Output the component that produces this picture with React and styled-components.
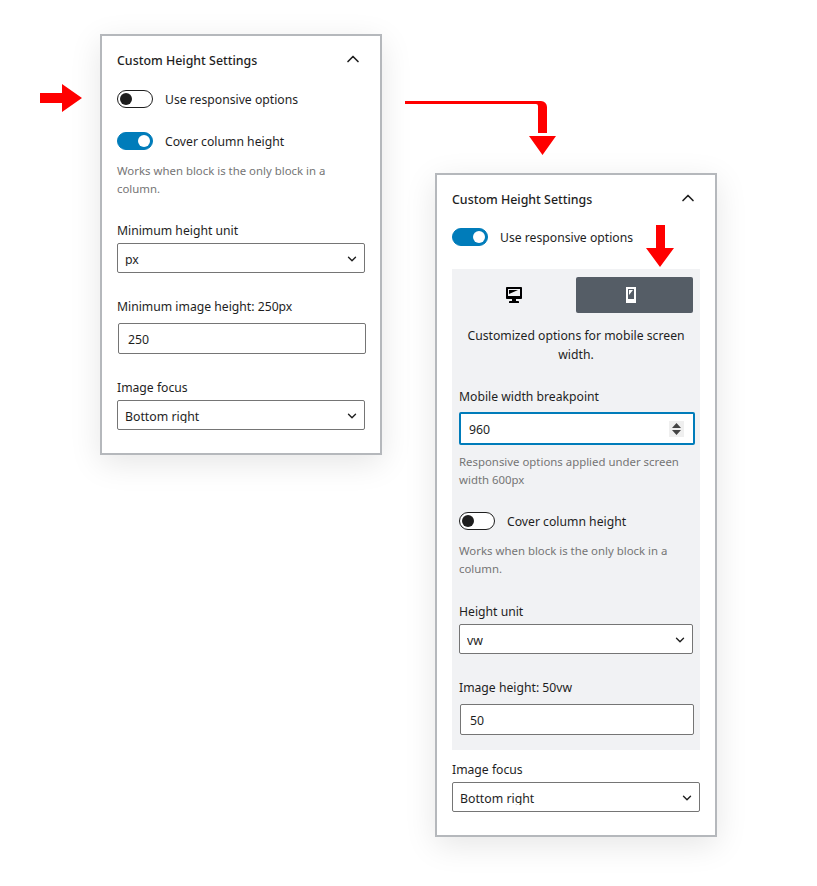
import styled, { createGlobalStyle } from "styled-components";
import { ChevronDown, ChevronUp } from "lucide-react";

const GlobalStyle = createGlobalStyle`
  html, body {
    margin: 0;
    padding: 0;
    background: #fff;
  }
  body {
    font-family: "Noto Sans", "Open Sans", sans-serif;
    font-size: 12.2px;
    color: #1e1e1e;
  }
`;

const Page = styled.div`
  position: relative;
  width: 817px;
  height: 886px;
  overflow: hidden;
  padding: 34px 0 0 100px;
  box-sizing: border-box;
  display: flex;
  align-items: flex-start;
  gap: 53px;
`;

const Panel = styled.section`
  width: 282px;
  box-sizing: border-box;
  flex: none;
  margin-top: ${(p) => p.$offset || 0}px;
  padding: 14px 15px 23px;
  background: #fff;
  border: 2px solid #b5b8bc;
  box-shadow: 0 8px 30px rgba(0, 0, 0, 0.1);
`;

const PanelHeader = styled.header`
  display: flex;
  justify-content: space-between;
  align-items: center;
  height: 20px;
  margin-bottom: ${(p) => p.$gap}px;
  font-size: 12.4px;
  font-weight: 500;
  svg {
    margin-right: 2px;
    margin-top: -3px;
  }
`;

const ToggleRow = styled.div`
  display: flex;
  align-items: center;
  gap: 12px;
  height: 18px;
  margin-bottom: ${(p) => p.$gap || 0}px;
`;

const Track = styled.span`
  position: relative;
  flex: none;
  width: 36px;
  height: 18px;
  box-sizing: border-box;
  border-radius: 9px;
  background: ${(p) => (p.$on ? "#007cba" : "#fff")};
  border: 1px solid ${(p) => (p.$on ? "#007cba" : "#1e1e1e")};
  &::after {
    content: "";
    position: absolute;
    top: 2px;
    left: ${(p) => (p.$on ? "20px" : "2px")};
    width: 12px;
    height: 12px;
    border-radius: 50%;
    background: ${(p) => (p.$on ? "#fff" : "#1e1e1e")};
  }
`;

const Help = styled.p`
  margin: 0 0 ${(p) => p.$gap || 0}px;
  font-size: 11.4px;
  line-height: 18px;
  color: #757575;
`;

const Label = styled.label`
  display: block;
  height: 18px;
  line-height: 18px;
  margin-top: ${(p) => p.$top || 0}px;
  margin-bottom: ${(p) => p.$gap ?? 3}px;
`;

const SelectBox = styled.div`
  position: relative;
  box-sizing: border-box;
  height: 30px;
  padding: 7px 7px 0;
  margin-bottom: ${(p) => p.$gap || 0}px;
  border: 1px solid #757575;
  border-radius: 2px;
  background: #fff;
  svg {
    position: absolute;
    right: 5px;
    top: 8px;
  }
`;

// the native select cuts the descenders off in the reference
const SelectValue = styled.span`
  display: block;
  height: 15px;
  line-height: 18px;
  overflow: hidden;
  font-size: 12.3px;
`;

const NumberInput = styled.div`
  display: flex;
  align-items: center;
  justify-content: space-between;
  box-sizing: border-box;
  width: ${(p) => p.$width || 248}px;
  height: ${(p) => (p.$focus ? 33 : 31)}px;
  margin: 0 0 ${(p) => p.$gap || 0}px ${(p) => (p.$focus ? 0 : 1)}px;
  padding: ${(p) => (p.$focus ? "1px 9px 0 8px" : "1px 8px 0 9px")};
  border: ${(p) => (p.$focus ? "2px solid #007cba" : "1px solid #757575")};
  border-radius: 2px;
  background: #fff;
  font-size: 12.3px;
`;

const Spinner = styled.span`
  display: flex;
  align-items: center;
  justify-content: center;
  width: 15px;
  height: 16px;
  margin-top: -1px;
  background: #efefef;
`;

const Responsive = styled.div`
  margin-bottom: 11px;
  padding: 8px 7px 15px;
  background: #f1f2f4;
`;

const Tabs = styled.div`
  display: grid;
  grid-template-columns: 1fr 1fr;
  margin-bottom: 13px;
`;

const Tab = styled.div`
  display: flex;
  align-items: center;
  justify-content: center;
  height: 36px;
  padding-right: 7px;
  box-sizing: border-box;
  border-radius: 2px;
  background: ${(p) => (p.$active ? "#555d66" : "transparent")};
`;

const TabNote = styled.p`
  margin: 0 0 24px;
  line-height: 19px;
  text-align: center;
`;

const Arrow = styled.svg`
  position: absolute;
  left: ${(p) => p.$x}px;
  top: ${(p) => p.$y}px;
`;

const DesktopIcon = () => (
  <svg width="20" height="20" viewBox="0 0 20 20">
    <path
      fill="#000"
      fillRule="evenodd"
      d="M3 2h14c.55 0 1 .45 1 1v10c0 .55-.45 1-1 1h-5v2h2c.55 0 1 .45 1 1v1H5v-1c0-.55.45-1 1-1h2v-2H3c-.55 0-1-.45-1-1V3c0-.55.45-1 1-1zm13 9V4H4v7h12zM5 5h9L5 9V5z"
    />
  </svg>
);

const MobileIcon = () => (
  <svg width="20" height="20" viewBox="0 0 20 20">
    <path
      fill="#fff"
      fillRule="evenodd"
      d="M5 2h10v16H5V2zm8 12V4H7v10h6zM8 5h4l-4 5V5z"
    />
  </svg>
);

const SpinnerIcon = () => (
  <svg width="9" height="12" viewBox="0 0 9 12">
    <path fill="#444" d="M4.500 0 9 5H0zM0 7h9l-4.500 5z" />
  </svg>
);

const Select = ({ value, gap }) => (
  <SelectBox $gap={gap}>
    <SelectValue>{value}</SelectValue>
    <ChevronDown size={14} strokeWidth={2.4} color="#1e1e1e" />
  </SelectBox>
);

const App = () => (
  <Page>
    <GlobalStyle />

    <Panel>
      <PanelHeader $gap={20}>
        Custom Height Settings
        <ChevronUp size={20} strokeWidth={2} color="#1e1e1e" />
      </PanelHeader>
      <ToggleRow $gap={24}>
        <Track />
        Use responsive options
      </ToggleRow>
      <ToggleRow $gap={12}>
        <Track $on />
        Cover column height
      </ToggleRow>
      <Help $gap={24}>Works when block is the only block in a column.</Help>
      <Label>Minimum height unit</Label>
      <Select value="px" gap={25} />
      <Label $gap={7}>Minimum image height: 250px</Label>
      <NumberInput>250</NumberInput>
      <Label $top={25}>Image focus</Label>
      <Select value="Bottom right" />
    </Panel>

    <Panel $offset={139}>
      <PanelHeader $gap={19}>
        Custom Height Settings
        <ChevronUp size={20} strokeWidth={2} color="#1e1e1e" />
      </PanelHeader>
      <ToggleRow $gap={23}>
        <Track $on />
        Use responsive options
      </ToggleRow>
      <Responsive>
        <Tabs>
          <Tab>
            <DesktopIcon />
          </Tab>
          <Tab $active>
            <MobileIcon />
          </Tab>
        </Tabs>
        <TabNote>Customized options for mobile screen width.</TabNote>
        <Label $gap={6}>Mobile width breakpoint</Label>
        <NumberInput $focus $width={236} $gap={8}>
          960
          <Spinner>
            <SpinnerIcon />
          </Spinner>
        </NumberInput>
        <Help $gap={23}>Responsive options applied under screen width 600px</Help>
        <ToggleRow $gap={12}>
          <Track />
          Cover column height
        </ToggleRow>
        <Help $gap={25}>Works when block is the only block in a column.</Help>
        <Label>Height unit</Label>
        <Select value="vw" gap={25} />
        <Label $gap={7}>Image height: 50vw</Label>
        <NumberInput $width={234}>50</NumberInput>
      </Responsive>
      <Label>Image focus</Label>
      <Select value="Bottom right" />
    </Panel>

    <Arrow $x={40} $y={84} width="42" height="28" viewBox="0 0 42 28">
      <path fill="#f00" d="M0 9h22V0l20 14-20 14v-9H0z" />
    </Arrow>
    <Arrow $x={405} $y={100} width="152" height="56" viewBox="0 0 152 56">
      <path
        fill="#f00"
        d="M0 1h136a6 6 0 0 1 6 6v26h-9V6a2 2 0 0 0-2-2H0zM124 36h27l-13.500 19z"
      />
    </Arrow>
    <Arrow $x={646} $y={225} width="28" height="42" viewBox="0 0 28 42">
      <path fill="#f00" d="M10 0h9v23h9L14 42 0 23h10z" />
    </Arrow>
  </Page>
);

export default App;
